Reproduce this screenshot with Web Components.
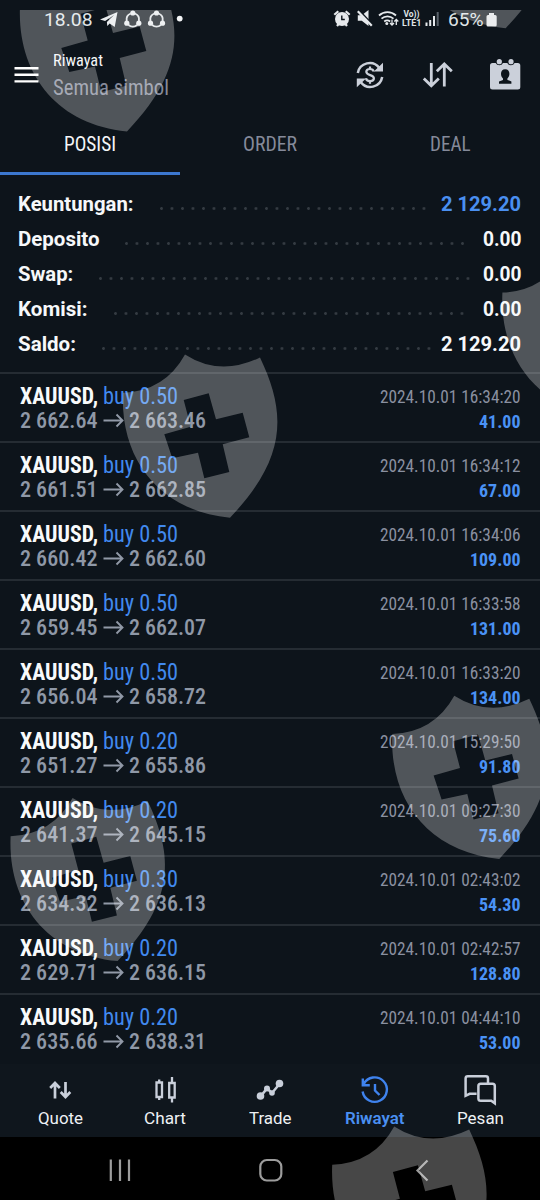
<!DOCTYPE html>
<html lang="id">
<head>
<meta charset="utf-8">
<title>Riwayat</title>
<style>
html,body{margin:0;padding:0;background:#0d141b}
body{font-family:"Roboto Condensed",Roboto,"Liberation Sans",sans-serif;width:540px;height:1200px;overflow:hidden}
</style>
</head>
<body>
<history-app></history-app>
<script>
const make = (host, html) => {
  const r = host.attachShadow({mode:'open'});
  const t = document.createElement('template');
  t.innerHTML = html;
  r.appendChild(t.content.cloneNode(true));
  return r;
};

/* One line of text condensed or widened to a given width. */
customElements.define('fit-text', class extends HTMLElement {
  connectedCallback(){
    if (this.shadowRoot) return;
    const r = make(this, `<style>:host{display:inline-block;white-space:pre;vertical-align:top}
      span{display:inline-block;transform-origin:0 50%}</style><span><slot></slot></span>`);
    const w = +this.getAttribute('w');
    this.style.width = w + 'px';
    const s = r.querySelector('span');
    const fit = () => { if (s.offsetWidth) { s.style.transform = 'none'; s.style.transform = `scaleX(${w / s.getBoundingClientRect().width})`; } };
    fit();
    requestAnimationFrame(fit);
  }
});

customElements.define('status-bar', class extends HTMLElement {
  connectedCallback(){ make(this, `<style>
    :host{display:flex;height:38px;box-sizing:border-box;padding:0 43px 0 44px;color:#dfe3e6;font:18px/40px Roboto,sans-serif;align-items:center}
    svg{display:block;flex:none} .l{margin-left:7px} .r{margin-left:auto;margin-right:7px} .b{margin-left:3px}
    fit-text{height:38px;line-height:40px}
    text{font:bold 8.6px Roboto,sans-serif;fill:#dfe3e6;stroke:none}</style>
    <fit-text w="48.500">18.08</fit-text>
    <svg class="l" width="84" height="38" viewBox="99.500 0 84 38">
      <path fill="#e8ebee" d="M99.500 19.500 117 12l-2.800 15-5-3.600-2.400 2.500-.4-4 7.200-6.800-9 6z"/>
      <g id="c" fill="none" stroke="#dfe3e6" stroke-width="1.900"><path d="M126.200 21a6.800 6.800 0 0 1 4-7.500M134.400 13.500a6.800 6.800 0 0 1 4 7.500M128 25a6.800 6.800 0 0 0 8.600 0"/>
      <g fill="#e8ebee" stroke="none"><circle cx="132.300" cy="13" r="2.600"/><circle cx="126.300" cy="23.200" r="2.600"/><circle cx="138.300" cy="23.200" r="2.600"/></g></g>
      <use href="#c" x="23.700"/>
      <circle cx="179.200" cy="18.600" r="2.900" fill="#f2f4f6"/>
    </svg>
    <svg class="r" width="108" height="38" viewBox="333.500 0 108 38" fill="none" stroke="#e6e9ec" stroke-width="2.200">
      <circle cx="342.500" cy="19" r="5.900" fill="#e6e9ec"/><path d="M334.800 14.800l4-3.600M350.200 14.800l-4-3.600M337.500 26l2-2.500M347.500 26l-2-2.500"/><path d="M342.300 15.500v4h3" stroke="#0d141b" stroke-width="1.400"/>
      <path d="M358.300 15.300h4l6.700-5.300v16l-6.700-5.300h-4z" fill="#e6e9ec" stroke="none"/><path d="M359.800 10.800l14 15" stroke="#0d141b" stroke-width="2.200"/><path d="M358.300 11.300l14 14.500" stroke-width="2.200"/>
      <g stroke-width="1.800"><path d="M379.500 15.500a12.500 12.500 0 0 1 17 0M382 18.600a9 9 0 0 1 12 0M384.700 21.500a5.200 5.200 0 0 1 6 0"/></g><circle cx="387.300" cy="23.500" r="1.500" fill="#e6e9ec" stroke="none"/>
      <path stroke-width="1.300" d="M392.500 19.500v5.500m-2-2 2 2 2-2M396.800 25v-5.500m-2 2 2-2 2 2"/>
      <text x="404" y="17" textLength="16" lengthAdjust="spacingAndGlyphs">Vo))</text><text x="402.500" y="26" textLength="19.500" lengthAdjust="spacingAndGlyphs">LTE1</text>
      <path stroke-width="2" d="M427 26v-3.500M430.700 26v-6M434.500 26v-10"/><path stroke-width="2" stroke="#59616a" d="M438.200 26v-14"/>
    </svg>
    <fit-text w="35.500">65%</fit-text>
    <svg class="b" width="11" height="38" viewBox="485 0 11 38"><path fill="#e3e6e9" d="M485.500 16.500q0-1.500 1.500-1.500h1v-2h5v2h1.200q1.500 0 1.500 1.500v8.500q0 1.500-1.500 1.500h-7.200q-1.500 0-1.500-1.500z"/></svg>`); }
});

customElements.define('app-bar', class extends HTMLElement {
  connectedCallback(){ make(this, `<style>
    :host{display:flex;height:76px;box-sizing:border-box;padding:0 19px 0 14px;font-stretch:75%}
    svg{display:block;flex:none}
    .t{margin-left:14px;display:grid;grid-template-rows:25px 29px;padding-top:9.500px;flex:1}
    .a{font-size:17px;line-height:25px;color:#f4f6f8}.s{font-size:22px;line-height:29px;color:#858a9a}</style>
    <svg width="25" height="76" viewBox="14 38 25 76"><path d="M14.500 68.200h24M14.500 74.800h24M14.500 81.400h24" stroke="#fff" stroke-width="2.400"/></svg>
    <div class="t"><fit-text class="a" w="50">Riwayat</fit-text><fit-text class="s" w="116">Semua simbol</fit-text></div>
    <svg width="171" height="76" viewBox="350 38 171 76" fill="none" stroke="#cbd0da" stroke-width="2.500">
      <path d="M357.800 73a12 12 0 0 1 21.500-5M382.200 77a12 12 0 0 1-21.500 5"/>
      <path fill="#cbd0da" stroke="none" d="M383 62.800v8.700h-9.200zM356.800 87.300v-8.700h9.200z"/>
      <path stroke-width="2.200" d="M373.700 71.500c-.5-2-1.900-2.500-3.700-2.500-2.200 0-3.700 1-3.700 2.800 0 4.200 7.600 2.400 7.600 6.500 0 1.900-1.600 2.800-3.900 2.800-2.200 0-3.700-1-4-2.800M370 66.500v2.500M370 81v2.700"/>
      <path stroke-width="2.800" d="M431.300 63v22M423.800 78.500l7.500 7.300 7.500-7.300M444.300 86.500v-22M436.800 71.300l7.500-7.300 7.500 7.300"/>
      <path fill="#cbd0da" stroke="none" d="M492.500 63h3.200a4 4 0 0 0 7.300 0h4.300a4 4 0 0 0 7.300 0h3.200q2.500 0 2.500 2.500v21.500q0 2.500-2.500 2.500h-25.300q-2.500 0-2.500-2.500v-21.500q0-2.500 2.500-2.500z"/>
      <circle cx="499.300" cy="61.700" r="2.600" fill="#cbd0da" stroke="none"/><circle cx="511" cy="61.700" r="2.600" fill="#cbd0da" stroke="none"/>
      <path fill="#0d141b" stroke="none" d="M505.200 69.300c2.800 0 4.200 2 4.200 4.500 0 2-.8 3.600-2 4.600v1.500l4 1.500v2.300h-12.400v-2.300l4-1.500v-1.500c-1.200-1-2-2.600-2-4.600 0-2.500 1.400-4.500 4.200-4.500z"/>
    </svg>`); }
});

customElements.define('tab-strip', class extends HTMLElement {
  connectedCallback(){ make(this, `<style>
    :host{display:grid;grid-template-columns:repeat(3,1fr);height:61px;font-size:19.500px;line-height:62px;font-stretch:75%;color:#858a9a;text-align:center}
    div{box-sizing:border-box;height:61px} .on{color:#f4f6f8;border-bottom:3px solid #3c78d0}</style>
    <div class="on"><fit-text w="52">POSISI</fit-text></div><div><fit-text w="54">ORDER</fit-text></div><div><fit-text w="40.500">DEAL</fit-text></div>`); }
});

customElements.define('sum-row', class extends HTMLElement {
  connectedCallback(){
    const a = n => this.getAttribute(n);
    make(this, `<style>
    :host{display:flex;height:35px;line-height:36px;font-family:Roboto,sans-serif;font-weight:680;font-size:20px;color:#f6f8fa;padding:0 19px 0 18px}
    i{display:block;height:3px;margin-top:21px;background:radial-gradient(circle at 1.500px 1.500px,#343b42 1px,transparent 1.800px) 0 0/10.500px 3px repeat-x}
    .v{margin-left:auto;color:var(--value,#f6f8fa)}</style>
    <fit-text w="${a('lw')}">${a('label')}</fit-text><i style="margin-left:${a('s')-18-a('lw')}px;width:${a('e')-a('s')+2}px"></i><fit-text class="v" w="${a('vw')}">${a('value')}</fit-text>`); }
});

customElements.define('deal-row', class extends HTMLElement {
  connectedCallback(){
    const [vol, from, to, date, sum] = this.getAttribute('data').split('|');
    make(this, `<style>
    :host{display:flex;justify-content:space-between;height:69px;box-sizing:border-box;border-top:2px solid #252c33;padding:0 20px;font-stretch:75%}
    .l{padding-top:10px;display:grid;grid-template-rows:24px 26px}.r{padding-top:11px;display:grid;grid-template-rows:25px 26px;justify-items:end}
    .l>div{display:flex}
    .a{font-size:23px;line-height:25px}.n{font-weight:700;color:#f8fafb}.b{margin-left:5px;color:#4189ee}
    .p{font-size:22px;line-height:26px;font-weight:550;color:#8f98a7}
    svg{display:block;margin:0 5.500px 0 5px}
    .d{font-size:18.500px;line-height:25px;color:#8a90a0}.s{font-size:18.500px;line-height:24px;font-weight:700;color:#4a92f5}</style>
    <div class="l"><div class="a"><fit-text class="n" w="78">XAUUSD,</fit-text><fit-text class="b" w="75">buy ${vol}</fit-text></div>
    <div class="p"><fit-text w="77.500">${from}</fit-text><svg width="21" height="26" fill="none" stroke="#9199a7" stroke-width="1.900"><path d="M.5 12.500h19M13.500 6.500l6 6-6 6"/></svg><fit-text w="77">${to}</fit-text></div></div>
    <div class="r"><fit-text class="d" w="140.500">${date}</fit-text><fit-text class="s" w="${sum.length>5?50.5:41.5}">${sum}</fit-text></div>`); }
});

const ICONS = {
  quote:'<path d="M-5 8.500v-15M-9.800-2l4.800-5 4.800 5M5.500-8V7M.7 2l4.800 5 4.800-5" stroke-width="2.700"/>',
  chart:'<path d="M-8.500-7.500h5.500v14.500h-5.500zM-5.800-10.500v3M-5.800 7v3M4.200-7h5.500v14.500h-5.500zM7-13v6M7 7.500v5" stroke-width="2.300"/>',
  trade:'<path d="M-9.500 6.500l6.500-8 5 4.500 7.500-9" stroke-width="2.600"/><g fill="currentColor" stroke="none"><circle cx="-9.500" cy="6" r="3.800"/><circle cx="-3" cy="-1.500" r="3"/><circle cx="2" cy="3" r="2.800"/><circle cx="9.500" cy="-6.500" r="3.800"/></g>',
  history:'<path d="M-11.200-6a12.200 12.200 0 1 1-1.200 7.500M-12.200-11.500v6.800h7M0-6v6.500l4.500 4.500" stroke-width="2.400"/>',
  chat:'<path d="M8-6v-5.500q0-2.200-2.200-2.200h-18q-2.200 0-2.200 2.200V5.800l4-2h7M.7-6.200h11.800q2.300 0 2.300 2.300v17.200l-3.600-2.600H.7q-2.300 0-2.300-2.300v-12.300q0-2.300 2.300-2.300z" stroke-width="2.500"/>'
};
customElements.define('nav-item', class extends HTMLElement {
  connectedCallback(){ make(this, `<style>
    :host{display:flex;flex-direction:column;align-items:center;color:#c9cfda}
    :host([on]){color:#3f83ee;--label:#4a90f2;font-weight:650}
    svg{display:block;margin-top:9px}fit-text{font-size:16px;line-height:22px;margin-top:1px;color:var(--label,#eef1f4)}</style>
    <svg width="34" height="34" viewBox="-17 -17 34 34" fill="none" stroke="currentColor" stroke-width="2.500">${ICONS[this.getAttribute('icon')]}</svg>
    <fit-text w="${this.getAttribute('w')}">${this.getAttribute('label')}</fit-text>`); }
});

customElements.define('bottom-nav', class extends HTMLElement {
  connectedCallback(){ make(this, `<style>
    :host{display:grid;grid-template-columns:repeat(5,105px);padding:0 7.500px;height:73px;background:#0f161d;font-family:Roboto,sans-serif}</style>
    <nav-item icon="quote" label="Quote" w="45"></nav-item><nav-item icon="chart" label="Chart" w="42"></nav-item><nav-item icon="trade" label="Trade" w="42.500"></nav-item><nav-item on icon="history" label="Riwayat" w="59.500"></nav-item><nav-item icon="chat" label="Pesan" w="47"></nav-item>`); }
});

customElements.define('system-nav', class extends HTMLElement {
  connectedCallback(){ make(this, `<style>:host{display:block;height:63px;background:#000}svg{display:block}</style>
    <svg width="540" height="63" viewBox="0 1137 540 63" fill="none" stroke="#9c9c9c" stroke-width="2.200">
    <path d="M110.800 1159.500v21.500M120 1159.500v21.500M129 1159.500v21.500"/><rect x="260.300" y="1160" width="21" height="20.500" rx="6.500"/><path d="M427.500 1160.500l-10 10 10 10"/></svg>`); }
});

/* Translucent shields laid over the whole screen. */
customElements.define('shield-layer', class extends HTMLElement {
  connectedCallback(){
    const d = 'M185 354.500Q220 377 260 357.500C286 412 288 457 230 517.700C160 511 120 460 123 392.800Q165 391 185 354.500ZM183.700 400L190.700 426.700L164.300 434.300L172.300 458.300L198 452.700L204.300 478.300L229.300 472L222.700 444.300L249.300 437.300L242.700 412.700L216 419.300L208.700 393.300Z';
    const at = [[-103,-386.2],[275.7,-489.5],[379.4,-100.2],[0,0],[269.3,341.2],[-112.4,443.4],[209.2,772]];
    make(this, `<style>:host{position:absolute;left:0;top:10px;width:540px;height:1190px;pointer-events:none}svg{display:block}</style>
    <svg width="540" height="1190" viewBox="0 10 540 1190">${at.map(p=>`<path transform="translate(${p})" d="${d}" fill="#fff" fill-opacity=".28" fill-rule="evenodd"/>`).join('')}</svg>`); }
});

customElements.define('history-app', class extends HTMLElement {
  connectedCallback(){
    const sums = [['Keuntungan:',115.5,160,427,'2 129.20',80],['Deposito',81.5,125,464,'0.00',38.5],['Swap:',55.3,99,469,'0.00',38.5],['Komisi:',69.5,114,462,'0.00',38.5],['Saldo:',58,102,429,'2 129.20',80]];
    const rows = ['0.50|2 662.64|2 663.46|2024.10.01 16:34:20|41.00','0.50|2 661.51|2 662.85|2024.10.01 16:34:12|67.00','0.50|2 660.42|2 662.60|2024.10.01 16:34:06|109.00','0.50|2 659.45|2 662.07|2024.10.01 16:33:58|131.00','0.50|2 656.04|2 658.72|2024.10.01 16:33:20|134.00','0.20|2 651.27|2 655.86|2024.10.01 15:29:50|91.80','0.20|2 641.37|2 645.15|2024.10.01 09:27:30|75.60','0.30|2 634.32|2 636.13|2024.10.01 02:43:02|54.30','0.20|2 629.71|2 636.15|2024.10.01 02:42:57|128.80','0.20|2 635.66|2 638.31|2024.10.01 04:44:10|53.00'];
    make(this, `<style>:host{display:flex;flex-direction:column;position:relative;width:540px;height:1200px;background:#0d141b;overflow:hidden}
    :host>*{flex:none}
    .sum{height:197px;box-sizing:border-box;padding-top:11px} sum-row:first-child{--value:#4a8ff0} .list{height:692px;overflow:hidden}</style>
    <status-bar></status-bar><app-bar></app-bar><tab-strip></tab-strip>
    <div class="sum">${sums.map(s=>`<sum-row label="${s[0]}" lw="${s[1]}" s="${s[2]}" e="${s[3]}" value="${s[4]}" vw="${s[5]}"></sum-row>`).join('')}</div>
    <div class="list">${rows.map(r=>`<deal-row data="${r}"></deal-row>`).join('')}</div>
    <bottom-nav></bottom-nav><system-nav></system-nav><shield-layer></shield-layer>`); }
});
</script>
</body>
</html>
